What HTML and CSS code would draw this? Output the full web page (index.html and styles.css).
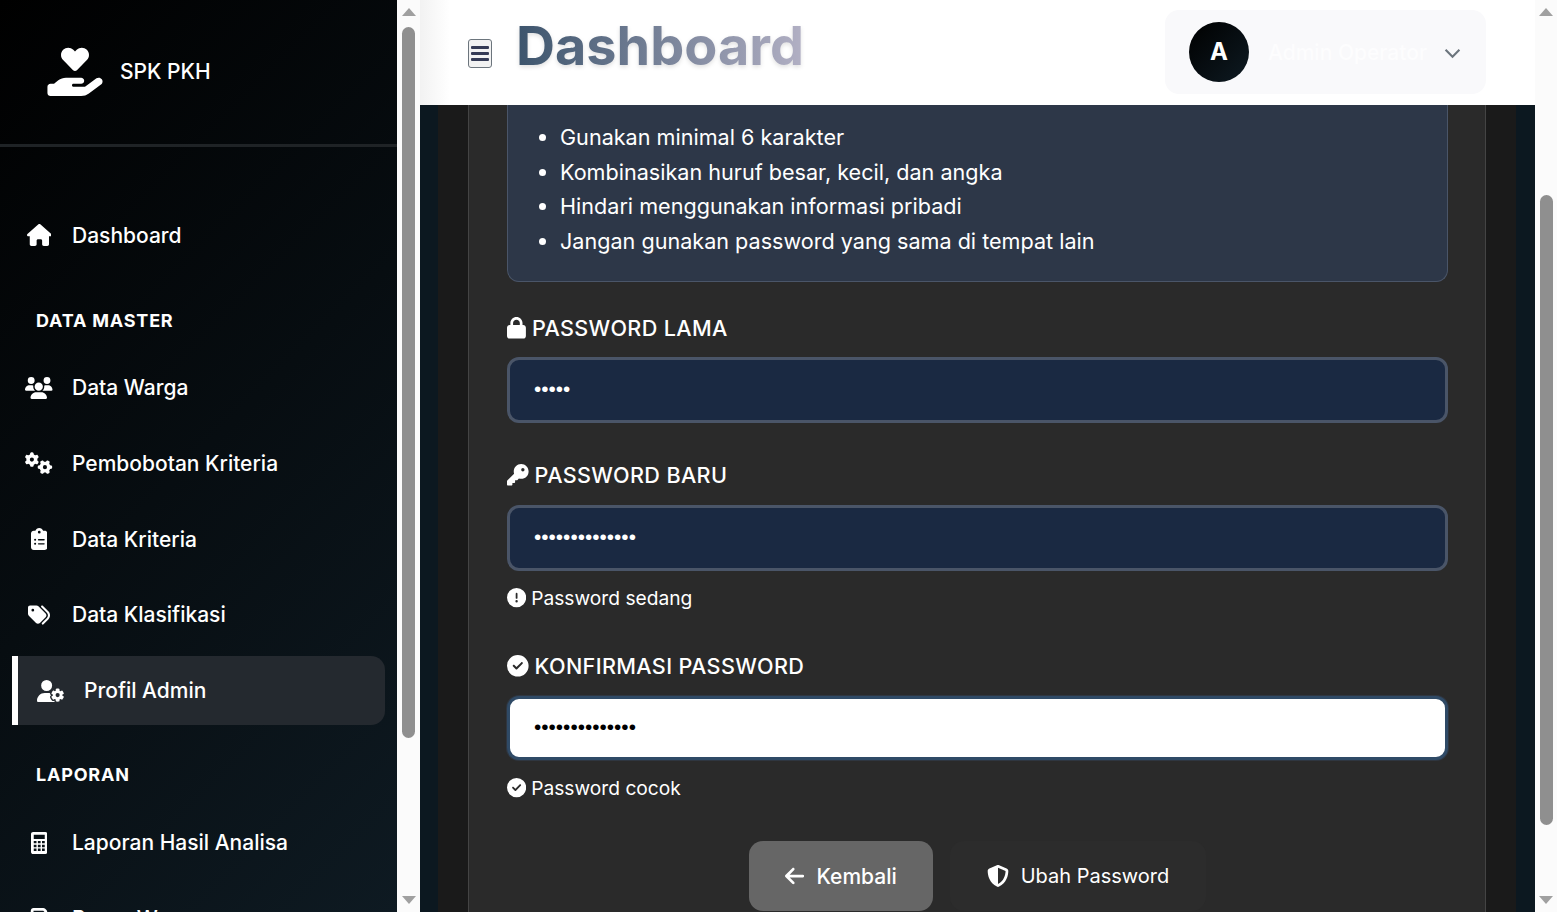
FILE: index.html
```html
<!DOCTYPE html>
<html lang="id">

<head>
  <meta charset="UTF-8" />
  <title>SPK PKH - Profil Admin</title>
  <link rel="stylesheet" href="styles.css">
</head>

<body>
  <div class="app">
    <aside class="sidebar">
      <div class="brand">
        <svg class="brand-icon" viewBox="0 0 576 512"><path d="M163.9 136.9c-29.4-29.8-29.4-78.2 0-108s77-29.8 106.4 0l17.7 18 17.7-18c29.4-29.8 77-29.8 106.4 0s29.4 78.2 0 108L310.5 240.1c-6.2 6.3-14.3 9.4-22.5 9.4s-16.3-3.1-22.5-9.4L163.9 136.9zM568.2 336.3c13.1 17.8 9.3 42.8-8.5 55.9L433.1 485.5c-23.4 17.2-51.6 26.5-80.7 26.5H192 32c-17.7 0-32-14.3-32-32V416c0-17.7 14.3-32 32-32H68.8l44.9-36c22.7-18.2 50.9-28 80-28H272h16 64c17.7 0 32 14.3 32 32s-14.3 32-32 32H288 272c-8.8 0-16 7.2-16 16s7.2 16 16 16H392.6l119.7-88.2c17.8-13.1 42.8-9.3 55.9 8.5z" /></svg>
        <span class="brand-name">SPK PKH</span>
      </div>

      <nav class="menu">
        <a class="menu-item">
          <span class="menu-icon"><svg viewBox="0 0 576 512"><path d="M575.8 255.5c0 18-15 32.1-32 32.1h-32l.7 160.2c0 2.7-.2 5.4-.5 8.1V472c0 22.1-17.9 40-40 40H456c-1.1 0-2.2 0-3.3-.1c-1.4 .1-2.8 .1-4.2 .1H416 392c-22.1 0-40-17.9-40-40V448 384c0-17.7-14.3-32-32-32H256c-17.7 0-32 14.3-32 32v64 24c0 22.1-17.9 40-40 40H160 128.1c-1.5 0-3-.1-4.5-.2c-1.2 .1-2.4 .2-3.6 .2H104c-22.1 0-40-17.9-40-40V360c0-.9 0-1.9 .1-2.8V287.6H32c-18 0-32-14-32-32.1c0-9 3-17 10-24L266.4 8c7-7 15-8 22-8s15 2 21 7L564.8 231.5c8 7 12 15 11 24z" /></svg></span>
          Dashboard
        </a>

        <div class="menu-title">DATA MASTER</div>
        <a class="menu-item">
          <span class="menu-icon"><svg viewBox="0 0 640 512"><path d="M144 0a80 80 0 1 1 0 160A80 80 0 1 1 144 0zM512 0a80 80 0 1 1 0 160A80 80 0 1 1 512 0zM0 298.7C0 239.8 47.8 192 106.7 192h42.7c15.9 0 31 3.5 44.6 9.7c-1.3 7.2-1.9 14.7-1.9 22.3c0 38.2 16.8 72.5 43.3 96c-.2 0-.4 0-.7 0H21.3C9.6 320 0 310.4 0 298.7zM405.3 320c-.2 0-.4 0-.7 0c26.6-23.5 43.3-57.8 43.3-96c0-7.6-.7-15-1.9-22.3c13.6-6.3 28.7-9.7 44.6-9.7h42.7C592.2 192 640 239.8 640 298.7c0 11.8-9.6 21.3-21.3 21.3H405.3zM224 224a96 96 0 1 1 192 0 96 96 0 1 1 -192 0zM128 485.3C128 411.7 187.7 352 261.3 352H378.7C452.3 352 512 411.7 512 485.3c0 14.7-11.9 26.7-26.7 26.7H154.7c-14.7 0-26.7-11.9-26.7-26.7z" /></svg></span>
          Data Warga
        </a>
        <a class="menu-item">
          <span class="menu-icon"><svg viewBox="0 0 640 512"><path d="M308.5 135.3c7.1-6.3 9.9-16.2 6.2-25c-2.3-5.3-4.8-10.5-7.6-15.5L304 89.4c-3-5-6.3-9.9-9.8-14.6c-5.7-7.6-15.7-10.1-24.7-7.1l-28.2 9.3c-10.7-8.8-23-16-36.2-20.9L199 27.1c-1.9-9.3-9.1-16.7-18.5-17.8C173.9 8.4 167.2 8 160.4 8h-.7c-6.8 0-13.5 .4-20.1 1.2c-9.4 1.1-16.6 8.6-18.5 17.8L115 56.1c-13.3 5-25.5 12.1-36.2 20.9L50.5 67.8c-9-3-19-.5-24.7 7.1c-3.5 4.7-6.8 9.6-9.9 14.6l-3 5.3c-2.8 5-5.3 10.2-7.6 15.6c-3.7 8.7-.9 18.6 6.2 25l22.2 19.8C32.6 161.9 32 168.9 32 176s.6 14.1 1.7 20.9L11.5 216.7c-7.1 6.3-9.9 16.2-6.2 25c2.3 5.3 4.8 10.5 7.6 15.6l3 5.2c3 5.1 6.3 9.9 9.9 14.6c5.7 7.6 15.7 10.1 24.7 7.1l28.2-9.3c10.7 8.8 23 16 36.2 20.9l6.1 29.1c1.9 9.3 9.1 16.7 18.5 17.8c6.7 .8 13.5 1.2 20.4 1.2s13.7-.4 20.4-1.2c9.4-1.1 16.6-8.6 18.5-17.8l6.1-29.1c13.3-5 25.5-12.1 36.2-20.9l28.2 9.3c9 3 19 .5 24.7-7.1c3.5-4.7 6.8-9.5 9.8-14.6l3.1-5.4c2.8-5 5.3-10.2 7.6-15.5c3.7-8.7 .9-18.6-6.2-25l-22.2-19.8c1.1-6.8 1.7-13.8 1.7-20.9s-.6-14.1-1.7-20.9l22.2-19.8zM208 176a48 48 0 1 1 -96 0 48 48 0 1 1 96 0zM504.7 500.5c6.3 7.1 16.2 9.9 25 6.2c5.3-2.3 10.5-4.8 15.5-7.6l5.4-3.1c5-3 9.9-6.3 14.6-9.8c7.6-5.7 10.1-15.7 7.1-24.7l-9.3-28.2c8.8-10.7 16-23 20.9-36.2l29.1-6.1c9.3-1.9 16.7-9.1 17.8-18.5c.8-6.7 1.2-13.5 1.2-20.4s-.4-13.7-1.2-20.4c-1.1-9.4-8.6-16.6-17.8-18.5L583.9 307c-5-13.3-12.1-25.5-20.9-36.2l9.3-28.2c3-9 .5-19-7.1-24.7c-4.7-3.5-9.6-6.8-14.6-9.9l-5.3-3c-5-2.8-10.2-5.3-15.6-7.6c-8.7-3.7-18.6-.9-25 6.2l-19.8 22.2c-6.8-1.1-13.8-1.7-20.9-1.7s-14.1 .6-20.9 1.7l-19.8-22.2c-6.3-7.1-16.2-9.9-25-6.2c-5.3 2.3-10.5 4.8-15.6 7.6l-5.2 3c-5.1 3-9.9 6.3-14.6 9.9c-7.6 5.7-10.1 15.7-7.1 24.7l9.3 28.2c-8.8 10.7-16 23-20.9 36.2L315.1 313c-9.3 1.9-16.7 9.1-17.8 18.5c-.8 6.7-1.2 13.5-1.2 20.4s.4 13.7 1.2 20.4c1.1 9.4 8.6 16.6 17.8 18.5l29.1 6.1c5 13.3 12.1 25.5 20.9 36.2l-9.3 28.2c-3 9-.5 19 7.1 24.7c4.7 3.5 9.5 6.8 14.6 9.8l5.4 3.1c5 2.8 10.2 5.3 15.5 7.6c8.7 3.7 18.6 .9 25-6.2l19.8-22.2c6.8 1.1 13.8 1.7 20.9 1.7s14.1-.6 20.9-1.7l19.8 22.2zM464 304a48 48 0 1 1 0 96 48 48 0 1 1 0-96z" /></svg></span>
          Pembobotan Kriteria
        </a>
        <a class="menu-item">
          <span class="menu-icon"><svg viewBox="0 0 384 512"><path d="M192 0c-41.8 0-77.4 26.7-90.5 64H64C28.7 64 0 92.7 0 128V448c0 35.3 28.7 64 64 64H320c35.3 0 64-28.7 64-64V128c0-35.3-28.7-64-64-64H282.5C269.4 26.7 233.8 0 192 0zm0 64a32 32 0 1 1 0 64 32 32 0 1 1 0-64zM72 272a24 24 0 1 1 48 0 24 24 0 1 1 -48 0zm104-16H304c8.8 0 16 7.2 16 16s-7.2 16-16 16H176c-8.8 0-16-7.2-16-16s7.2-16 16-16zM72 368a24 24 0 1 1 48 0 24 24 0 1 1 -48 0zm88 0c0-8.8 7.2-16 16-16H304c8.8 0 16 7.2 16 16s-7.2 16-16 16H176c-8.8 0-16-7.2-16-16z" /></svg></span>
          Data Kriteria
        </a>
        <a class="menu-item">
          <span class="menu-icon"><svg viewBox="0 0 512 512"><path d="M345 39.1L472.8 168.4c52.4 53 52.4 138.2 0 191.2L360.8 472.9c-9.3 9.4-24.5 9.5-33.9 .2s-9.5-24.5-.2-33.9L438.6 325.9c33.9-34.3 33.9-89.4 0-123.7L310.9 72.9c-9.3-9.4-9.2-24.6 .2-33.9s24.6-9.2 33.9 .2zM0 229.5V80C0 53.5 21.5 32 48 32H197.5c17 0 33.3 6.7 45.3 18.7l168 168c25 25 25 65.5 0 90.5L277.3 442.7c-25 25-65.5 25-90.5 0l-168-168C6.7 262.7 0 246.5 0 229.5zM144 144a32 32 0 1 0 -64 0 32 32 0 1 0 64 0z" /></svg></span>
          Data Klasifikasi
        </a>
        <a class="menu-item active">
          <span class="menu-icon"><svg viewBox="0 0 640 512"><path d="M224 0a128 128 0 1 1 0 256A128 128 0 1 1 224 0zM178.3 304h91.4c11.8 0 23.4 1.2 34.5 3.3c-2.1 18.5 7.4 35.6 21.8 44.8c-16.6 10.6-26.7 31.6-20 53.3c4 12.9 9.4 25.5 16.4 37.6s15.2 23.1 24.4 33c15.7 16.9 39.6 18.4 57.2 8.7v.9c0 9.2 2.7 18.5 7.9 26.3H29.7C13.3 512 0 498.7 0 482.3C0 383.8 79.8 304 178.3 304zM436 218.2c0-7 4.5-13.3 11.3-14.8c10.5-2.4 21.5-3.7 32.7-3.7s22.2 1.3 32.7 3.7c6.8 1.5 11.3 7.8 11.3 14.8v30.6c7.9 3.4 15.4 7.7 22.3 12.8l24.9-14.3c6.1-3.5 13.7-2.7 18.5 2.4c7.6 8.1 14.3 17.2 20.1 27.2s10.3 20.4 13.5 31c2.1 6.7-1.1 13.7-7.2 17.2l-25 14.4c.4 4 .7 8.1 .7 12.3s-.2 8.2-.7 12.3l25 14.4c6.1 3.5 9.2 10.5 7.2 17.2c-3.3 10.6-7.8 21-13.5 31s-12.5 19.1-20.1 27.2c-4.8 5.1-12.5 5.9-18.5 2.4l-24.9-14.3c-6.9 5.1-14.3 9.4-22.3 12.8l0 30.6c0 7-4.5 13.3-11.3 14.8c-10.5 2.4-21.5 3.7-32.7 3.7s-22.2-1.3-32.7-3.7c-6.8-1.5-11.3-7.8-11.3-14.8V454.8c-8-3.4-15.6-7.7-22.5-12.9l-24.7 14.3c-6.1 3.5-13.7 2.7-18.5-2.4c-7.6-8.1-14.3-17.2-20.1-27.2s-10.3-20.4-13.5-31c-2.1-6.7 1.1-13.7 7.2-17.2l24.8-14.3c-.4-4.1-.7-8.2-.7-12.4s.2-8.3 .7-12.4L343.8 325c-6.1-3.5-9.2-10.5-7.2-17.2c3.3-10.6 7.7-21 13.5-31s12.5-19.1 20.1-27.2c4.8-5.1 12.4-5.9 18.5-2.4l24.8 14.3c6.9-5.1 14.5-9.4 22.5-12.9V218.2zm92.1 133.5a48.1 48.1 0 1 0 -96.1 0 48.1 48.1 0 1 0 96.1 0z" /></svg></span>
          Profil Admin
        </a>

        <div class="menu-title menu-title-low">LAPORAN</div>
        <a class="menu-item">
          <span class="menu-icon"><svg viewBox="0 0 384 512"><path fill-rule="evenodd" d="M48 0h288c26.5 0 48 21.5 48 48v416c0 26.5-21.5 48-48 48H48c-26.5 0-48-21.5-48-48V48C0 21.5 21.5 0 48 0zM64 64v96h256V64zM64 208v56h64v-56zM160 208v56h64v-56zM256 208v56h64v-56zM64 296v56h64v-56zM160 296v56h64v-56zM256 296v56h64v-56zM64 384v56h64v-56zM160 384v56h64v-56zM256 384v56h64v-56z" /></svg></span>
          Laporan Hasil Analisa
        </a>
        <a class="menu-item">
          <span class="menu-icon"><svg viewBox="0 0 512 512"><path d="M128 0C92.7 0 64 28.7 64 64v96h64V64H354.7L384 93.3V160h64V93.3c0-17-6.7-33.3-18.7-45.3L400 18.7C388 6.7 371.7 0 354.7 0H128zM384 352v32 64H128V384 368 352H384zm64 32h32c17.7 0 32-14.3 32-32V256c0-35.3-28.7-64-64-64H64c-35.3 0-64 28.7-64 64v96c0 17.7 14.3 32 32 32H64v64c0 35.3 28.7 64 64 64H384c35.3 0 64-28.7 64-64V384zM432 248a24 24 0 1 1 0 48 24 24 0 1 1 0-48z" /></svg></span>
          Rapor Warga
        </a>
      </nav>
    </aside>
    <div class="scrollbar sidebar-scroll">
      <span class="arrow-up"></span>
      <span class="thumb"></span>
      <span class="arrow-down"></span>
    </div>

    <main class="main">
      <header class="topbar">
        <button class="toggler"><span></span><span></span><span></span></button>
        <h1 class="page-title">Dashboard</h1>
        <div class="user-pill">
          <span class="avatar">A</span>
          <span class="user-name">Admin Operator</span>
          <svg class="chevron" viewBox="0 0 16 10"><path d="M1.5 1.5L8 8l6.5-6.5" /></svg>
        </div>
      </header>

      <div class="content">
        <div class="container">
          <section class="card">
            <div class="tips">
              <ul>
                <li>Gunakan minimal 6 karakter</li>
                <li>Kombinasikan huruf besar, kecil, dan angka</li>
                <li>Hindari menggunakan informasi pribadi</li>
                <li>Jangan gunakan password yang sama di tempat lain</li>
              </ul>
            </div>

            <form class="form">
              <div class="field field-first">
                <label class="field-label">
                  <svg viewBox="0 0 448 512"><path d="M144 144v48H304V144c0-44.2-35.8-80-80-80s-80 35.8-80 80zM80 192V144C80 64.5 144.5 0 224 0s144 64.5 144 144v48h16c35.3 0 64 28.7 64 64V448c0 35.3-28.7 64-64 64H64c-35.3 0-64-28.7-64-64V256c0-35.3 28.7-64 64-64H80z" /></svg>
                  PASSWORD LAMA
                </label>
                <input class="input" type="password" value="12345">
              </div>

              <div class="field">
                <label class="field-label">
                  <svg viewBox="0 0 512 512"><path d="M336 352c97.2 0 176-78.8 176-176S433.2 0 336 0S160 78.8 160 176c0 18.7 2.9 36.8 8.3 53.7L7 391c-4.5 4.5-7 10.6-7 17v80c0 13.3 10.7 24 24 24h80c13.3 0 24-10.7 24-24V448h40c13.3 0 24-10.7 24-24V384h40c6.4 0 12.5-2.5 17-7l33.3-33.3c16.9 5.4 35 8.3 53.7 8.3zM376 96a40 40 0 1 1 0 80 40 40 0 1 1 0-80z" /></svg>
                  PASSWORD BARU
                </label>
                <input class="input" type="password" value="12345678901234">
                <div class="hint">
                  <svg viewBox="0 0 512 512"><path d="M256 512A256 256 0 1 0 256 0a256 256 0 1 0 0 512zm0-384c13.3 0 24 10.7 24 24V264c0 13.3-10.7 24-24 24s-24-10.7-24-24V152c0-13.3 10.7-24 24-24zM224 352a32 32 0 1 1 64 0 32 32 0 1 1 -64 0z" /></svg>
                  Password sedang
                </div>
              </div>

              <div class="field field-confirm">
                <label class="field-label">
                  <svg viewBox="0 0 512 512"><path d="M256 512A256 256 0 1 0 256 0a256 256 0 1 0 0 512zM369 209L241 337c-9.4 9.4-24.6 9.4-33.9 0l-64-64c-9.4-9.4-9.4-24.6 0-33.9s24.6-9.4 33.9 0l47 47L335 175c9.4-9.4 24.6-9.4 33.9 0s9.4 24.6 0 33.9z" /></svg>
                  KONFIRMASI PASSWORD
                </label>
                <input class="input input-focus" type="password" value="12345678901234">
                <div class="hint">
                  <svg viewBox="0 0 512 512"><path d="M256 512A256 256 0 1 0 256 0a256 256 0 1 0 0 512zM369 209L241 337c-9.4 9.4-24.6 9.4-33.9 0l-64-64c-9.4-9.4-9.4-24.6 0-33.9s24.6-9.4 33.9 0l47 47L335 175c9.4-9.4 24.6-9.4 33.9 0s9.4 24.6 0 33.9z" /></svg>
                  Password cocok
                </div>
              </div>

              <div class="actions">
                <button type="button" class="btn btn-back">
                  <svg viewBox="0 0 448 512"><path d="M9.4 233.4c-12.5 12.5-12.5 32.8 0 45.3l160 160c12.5 12.5 32.8 12.5 45.3 0s12.5-32.8 0-45.3L109.2 288 416 288c17.7 0 32-14.3 32-32s-14.3-32-32-32l-306.7 0L214.6 118.6c12.5-12.5 12.5-32.8 0-45.3s-32.8-12.5-45.3 0l-160 160z" /></svg>
                  Kembali
                </button>
                <button type="button" class="btn btn-save">
                  <svg viewBox="0 0 512 512"><path d="M256 0c4.6 0 9.2 1 13.4 2.9L457.7 82.8c22 9.3 38.4 31 38.3 57.2c-.5 99.2-41.3 280.7-213.6 363.2c-16.7 8-36.1 8-52.8 0C57.3 420.7 16.5 239.2 16 140c-.1-26.2 16.3-47.9 38.3-57.2L242.7 2.9C246.8 1 251.4 0 256 0zm0 66.8V444.8C394 378 431.1 230.1 432 141.4L256 66.8l0 0z" /></svg>
                  Ubah Password
                </button>
              </div>
            </form>
          </section>
        </div>
      </div>
    </main>
    <div class="scrollbar page-scroll">
      <span class="arrow-up"></span>
      <span class="thumb"></span>
      <span class="arrow-down"></span>
    </div>
  </div>
</body>

</html>
```

FILE: styles.css
```css
* {
  box-sizing: border-box;
}

html,
body {
  height: 100%;
  margin: 0;
  overflow: hidden;
}

body {
  font-family: Inter, "Liberation Sans", sans-serif;
  color: #fff;
  background: #fff;
}

svg {
  fill: currentColor;
  display: block;
  flex: none;
}

.app {
  display: flex;
  height: 912px;
}

/* sidebar */
.sidebar {
  width: 397px;
  flex: none;
  overflow: hidden;
  background: linear-gradient(135deg, #000 0%, #0e1a22 100%);
}

.brand {
  display: flex;
  align-items: center;
  height: 147px;
  padding: 0 0 2px 47px;
  border-bottom: 3px solid #1f2326;
}

.brand-icon {
  width: 56px;
  height: 49px;
  margin-right: 17px;
}

.brand-name {
  font-size: 21px;
  font-weight: 500;
}

.menu {
  padding-top: 53.5px;
}

.menu-item {
  display: flex;
  align-items: center;
  height: 69px;
  margin: 0 12px 6.75px;
  padding-left: 9px;
  font-size: 21px;
  font-weight: 500;
}

.menu-icon {
  width: 36px;
  margin-right: 15px;
  display: flex;
  justify-content: center;
}

.menu-icon svg {
  height: 22px;
}

.menu-item.active {
  padding-left: 15px;
  border-left: 6px solid #fff;
  border-radius: 0 14px 14px 0;
  background: #24292f;
}

.menu-title {
  padding: 31.75px 0 19px 36px;
  font-size: 18px;
  line-height: 26px;
  font-weight: 700;
  letter-spacing: .8px;
}

.menu-title-low {
  padding: 30px 0 20.5px 36px;
}

/* fake browser scrollbars */
.scrollbar {
  flex: none;
  display: flex;
  flex-direction: column;
  align-items: center;
  background: #fbfbfb;
}

.sidebar-scroll {
  width: 23px;
}

.page-scroll {
  width: 22px;
}

.arrow-up,
.arrow-down {
  width: 0;
  height: 0;
  border-left: 7.5px solid transparent;
  border-right: 7.5px solid transparent;
}

.arrow-up {
  margin-top: 8px;
  border-bottom: 8px solid #a0a0a0;
}

.arrow-down {
  margin-top: auto;
  margin-bottom: 8px;
  border-top: 8px solid #a0a0a0;
}

.thumb {
  width: 13px;
  border-radius: 7px;
  background: #8f8f8f;
}

.sidebar-scroll .thumb {
  height: 711px;
  margin-top: 11px;
}

.page-scroll .thumb {
  height: 630px;
  margin-top: 179px;
}

/* main */
.main {
  flex: 1;
  min-width: 0;
  display: flex;
  flex-direction: column;
}

.topbar {
  flex: none;
  height: 105px;
  display: flex;
  align-items: center;
  padding-left: 48px;
  background: linear-gradient(90deg, #f2f2f2, #fff 30px);
}

.toggler {
  width: 24px;
  height: 29px;
  padding: 0;
  margin-top: 1px;
  display: flex;
  flex-direction: column;
  align-items: center;
  justify-content: center;
  gap: 3px;
  background: #f2f2f2;
  border: 1px solid #6c757d;
  border-radius: 3px;
}

.toggler span {
  width: 18px;
  height: 3px;
  border-radius: 1px;
  background: #343a55;
}

.page-title {
  margin: -14px 0 0 24px;
  font-size: 54px;
  line-height: 64px;
  font-weight: 700;
  background: linear-gradient(90deg, #3c546c 0%, #b2b0c4 100%);
  -webkit-background-clip: text;
  background-clip: text;
  color: transparent;
  filter: drop-shadow(0 2px 2px rgba(0, 0, 0, .12));
}

.user-pill {
  width: 321px;
  height: 84px;
  margin: -1px 49px 0 auto;
  padding-left: 24px;
  display: flex;
  align-items: center;
  border-radius: 14px;
  background: #f9f9fb;
}

.avatar {
  width: 60px;
  height: 60px;
  padding-bottom: 2px;
  border-radius: 50%;
  display: flex;
  align-items: center;
  justify-content: center;
  font-size: 24px;
  font-weight: 700;
  color: #fff;
  background: linear-gradient(135deg, #000, #0e1a22);
}

.user-name {
  margin-left: 19px;
  font-size: 21px;
  font-weight: 500;
  color: #fdfdfe;
}

.chevron {
  width: 17px;
  height: 11px;
  margin: 3px 0 0 17px;
  fill: none;
  stroke: #6c757d;
  stroke-width: 2;
}

/* content */
.content {
  flex: 1;
  overflow: hidden;
  padding: 0 19px 0 18px;
  background: #0c1820;
}

.container {
  height: 100%;
  padding: 0 30px;
  background: #1a1a1a;
}

.card {
  height: 100%;
  padding: 0 37px 0 38px;
  border-left: 1px solid #444;
  border-right: 1px solid #444;
  background: #2a2a2a;
}

.tips {
  height: 177px;
  padding-top: 15px;
  border: 1px solid #4a5568;
  border-top: 0;
  border-radius: 0 0 12px 12px;
  background: #2d3748;
  font-size: 21.6px;
}

.tips ul {
  margin: 0;
  padding-left: 52px;
}

.tips li {
  line-height: 34.6px;
}

.field {
  margin-top: 39px;
}

.field-first {
  margin-top: 33px;
}

.field-confirm {
  margin-top: 43px;
}

.field-label {
  display: flex;
  align-items: center;
  gap: 6px;
  height: 26px;
  font-size: 21.6px;
  font-weight: 500;
  letter-spacing: .35px;
}

.field-label svg {
  height: 21.6px;
}

.input {
  display: block;
  width: 100%;
  height: 66px;
  margin-top: 17px;
  padding: 0 24px 2px;
  font-family: "Liberation Sans", sans-serif;
  font-size: 20.8px;
  color: #fff;
  background: #1a2942;
  border: 3px solid #4a5568;
  border-radius: 12px;
  outline: 0;
}

.field-first .input {
  margin-top: 16px;
}

.input-focus {
  height: 64px;
  color: #000;
  background: #fff;
  border-color: #2f4a66;
  box-shadow: 0 0 0 1px #2f3640;
}

.hint {
  display: flex;
  align-items: center;
  gap: 5px;
  height: 24px;
  margin-top: 15px;
  font-size: 19.2px;
}

.input-focus + .hint {
  margin-top: 16px;
}

.hint svg {
  height: 19.2px;
}

.actions {
  display: flex;
  justify-content: center;
  gap: 17px;
  margin-top: 41px;
}

.btn {
  height: 70px;
  display: flex;
  align-items: center;
  justify-content: center;
  gap: 12px;
  border: 0;
  border-radius: 14px;
  font-family: Inter, "Liberation Sans", sans-serif;
  color: #fff;
}

.btn svg {
  height: 22px;
}

.btn-back {
  width: 184px;
  font-size: 21px;
  font-weight: 500;
  background: #666;
}

.btn-save {
  width: 256px;
  font-size: 20px;
  font-weight: 400;
  background: #2c2c2c;
}
```
